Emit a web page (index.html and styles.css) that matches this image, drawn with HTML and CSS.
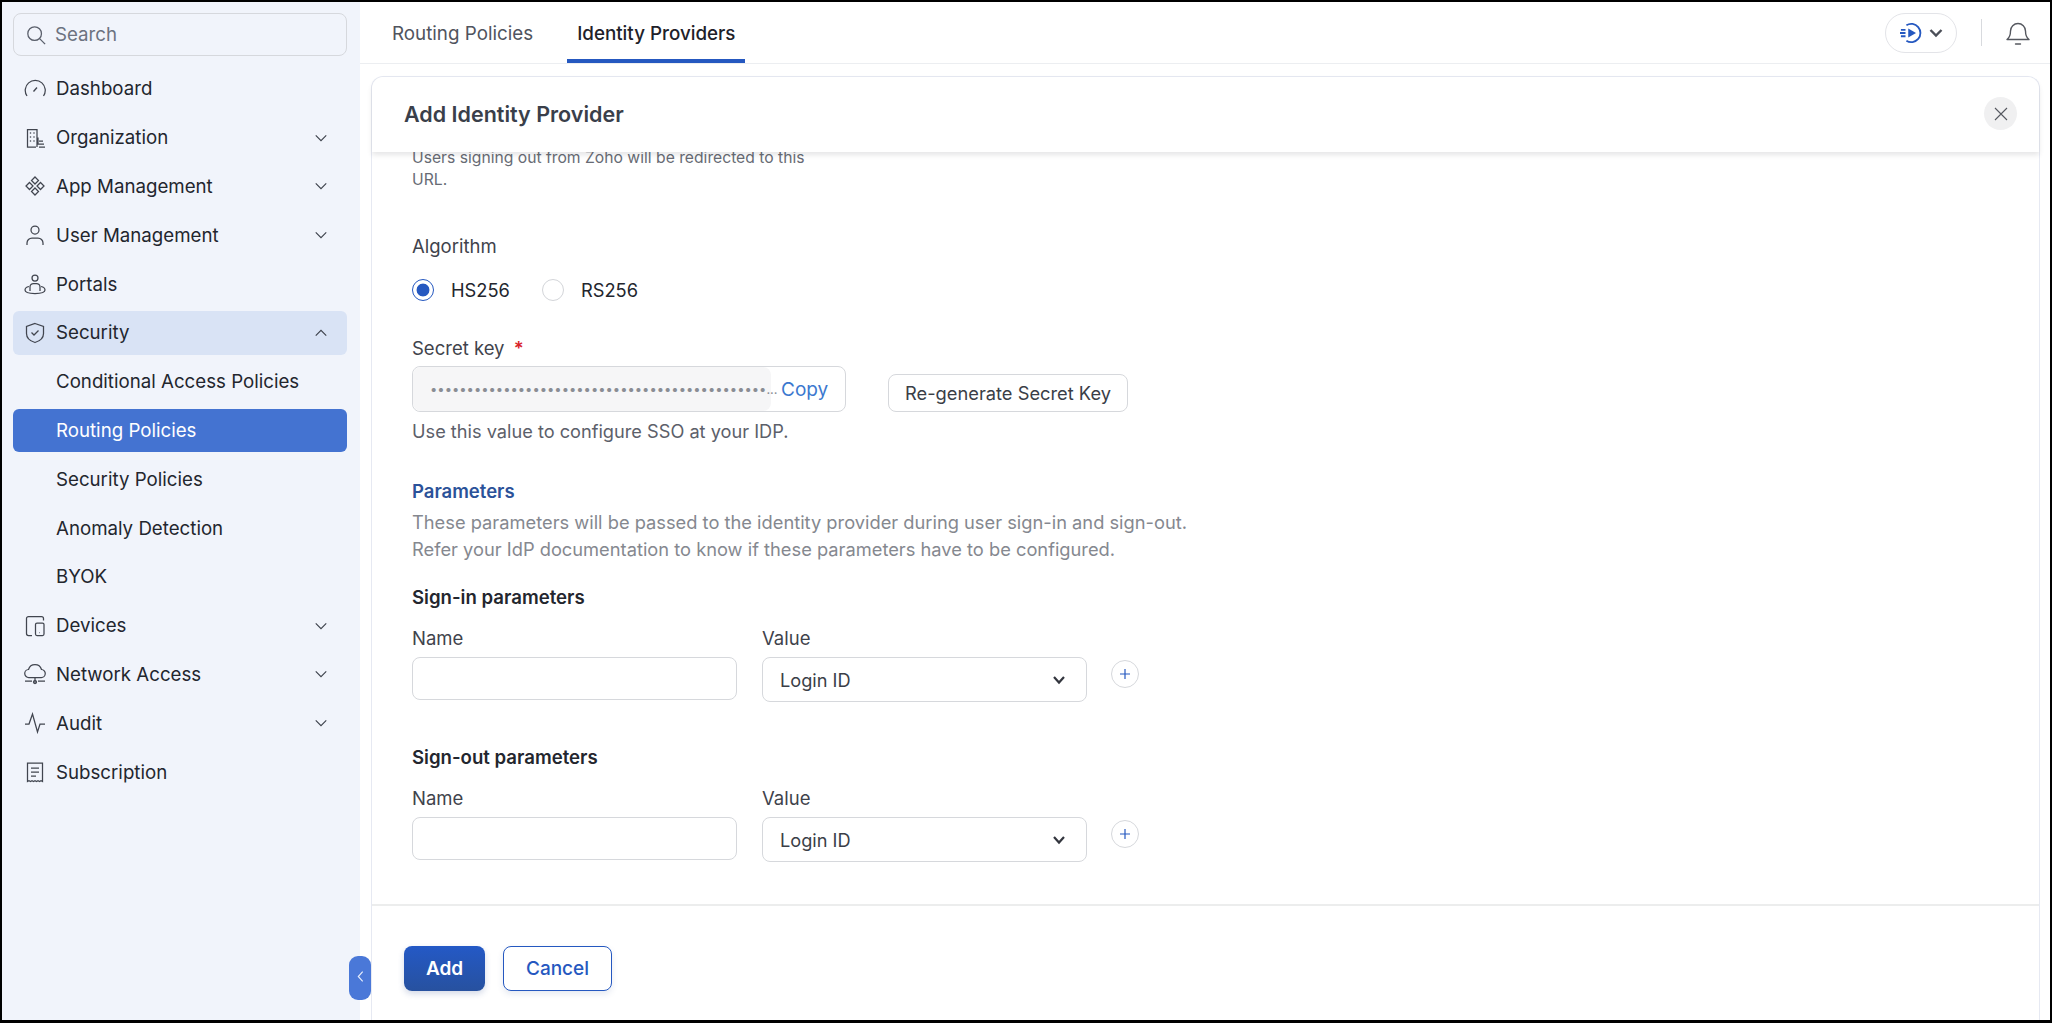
FILE: index.html
```html
<!DOCTYPE html>
<html>
<head>
	<title>Add Identity Provider</title>
	<link rel="stylesheet" href="styles.css">
</head>
<body>
	<svg class="defs">
		<symbol id="chev" viewBox="0 0 16 16"><path d="M2 5l6 6 6-6" fill="none" stroke="currentColor" stroke-width="1.3"/></symbol>
	</svg>
	<aside class="sidebar">
		<div class="search">
			<svg class="search-icon" viewBox="0 0 22 22"><circle cx="9.5" cy="9.5" r="7.5"/><path d="M15 15l6 6"/></svg>
			<span>Search</span>
		</div>
		<nav class="menu">
			<a class="menu-item">
				<svg class="ico" viewBox="0 0 22 22"><path d="M3 18A10 10 0 1 1 19.5 18"/><path d="M9.5 13.5l3.5-4"/></svg>
				<span>Dashboard</span>
			</a>
			<a class="menu-item">
				<svg class="ico" viewBox="0 0 22 22"><path d="M12 20H3.500V2.500H13V20M13 11h1v6h6M15 20h6M15 14h4"/><path class="dots" d="M6.500 6h.01M10 6h.01M6.500 10h.01M10 10h.01M6.500 14h.01M10 14h.01"/></svg>
				<span>Organization</span>
				<svg class="chev"><use href="#chev"/></svg>
			</a>
			<a class="menu-item">
				<svg class="ico" viewBox="0 0 22 22"><path d="M11 2l3.500 3.500L11 9 7.500 5.500zM5.500 7.500L9 11l-3.500 3.500L2 11zM16.500 7.500L20 11l-3.500 3.500L13 11zM11 13l3.500 3.500L11 20l-3.500-3.500z"/></svg>
				<span>App Management</span>
				<svg class="chev"><use href="#chev"/></svg>
			</a>
			<a class="menu-item">
				<svg class="ico" viewBox="0 0 22 22"><circle cx="11" cy="6" r="4"/><path d="M3 21v-2a5 5 0 0 1 5-5h6a5 5 0 0 1 5 5v2"/></svg>
				<span>User Management</span>
				<svg class="chev"><use href="#chev"/></svg>
			</a>
			<a class="menu-item">
				<svg class="ico" viewBox="0 0 22 22"><circle cx="11" cy="5" r="3"/><path d="M6 14a3.500 3.500 0 0 1 3.500-3.500h3A3.500 3.500 0 0 1 16 14v4M6 14v4"/><path d="M5 13.500C2.500 14 1 15.500 1 17c0 2 4 3.500 10 3.500s10-1.500 10-3.500c0-1.500-1.500-3-4-3.500"/></svg>
				<span>Portals</span>
			</a>
			<a class="menu-item open">
				<svg class="ico" viewBox="0 0 22 22"><path d="M11 1.500l8.500 3v7c0 4.500-3.500 7.500-8.500 9-5-1.500-8.500-4.500-8.500-9v-7z"/><path d="M7.500 10.500l2.500 2.500 4.500-4.500"/></svg>
				<span>Security</span>
				<svg class="chev up"><use href="#chev"/></svg>
			</a>
			<a class="menu-item">
				<span class="sub">Conditional Access Policies</span>
			</a>
			<a class="menu-item active">
				<span class="sub">Routing Policies</span>
			</a>
			<a class="menu-item">
				<span class="sub">Security Policies</span>
			</a>
			<a class="menu-item">
				<span class="sub">Anomaly Detection</span>
			</a>
			<a class="menu-item">
				<span class="sub">BYOK</span>
			</a>
			<a class="menu-item">
				<svg class="ico" viewBox="0 0 22 22"><path d="M8 20.500H4.500a2 2 0 0 1-2-2v-15a2 2 0 0 1 2-2h13a2 2 0 0 1 2 2v2"/><rect x="11.500" y="8" width="8.500" height="12.500" rx="1.500"/><path d="M15.500 17.500h.5"/></svg>
				<span>Devices</span>
				<svg class="chev"><use href="#chev"/></svg>
			</a>
			<a class="menu-item">
				<svg class="ico" viewBox="0 0 22 22"><path d="M6 14.500H5a4 4 0 0 1-.5-8 6.800 6.800 0 0 1 13 0 4 4 0 0 1-.5 8zM11 14.500V20M1 18h7M14 18h7"/><circle cx="11" cy="19" r="1.500"/></svg>
				<span>Network Access</span>
				<svg class="chev"><use href="#chev"/></svg>
			</a>
			<a class="menu-item">
				<svg class="ico" viewBox="0 0 22 22"><path d="M1 12h4l3.500-10 5 18 2.500-8h5"/></svg>
				<span>Audit</span>
				<svg class="chev"><use href="#chev"/></svg>
			</a>
			<a class="menu-item">
				<svg class="ico" viewBox="0 0 22 22"><path d="M3.500 2h15v18.500l-1.500-.8-1.500.8-1.500-.8-1.500.8-1.500-.8-1.500.8-1.500-.8-1.500.8-1.500-.8-1.500.8z"/><path d="M7 7h8M7 11h8M7 15h5"/></svg>
				<span>Subscription</span>
			</a>
		</nav>
	</aside>
	<button class="collapse">
		<svg viewBox="0 0 8 14"><path d="M6.500 1.500L1.500 7l5 5.500"/></svg>
	</button>
	<main class="main">
		<header class="topbar">
			<a class="tab">Routing Policies</a>
			<a class="tab tab-active">Identity Providers</a>
			<div class="top-actions">
				<div class="pill">
					<svg class="pill-play" viewBox="0 0 24 24"><path class="ring" d="M7 3.500A10 10 0 1 1 7 20.500"/><path class="tri" d="M9 7l8.500 5L9 17z"/><path class="ring" d="M1 8.500h5M0 12h6M1 15.500h5"/></svg>
					<svg class="pill-chev" viewBox="0 0 14 10"><path d="M1.500 2l5.500 5.500L12.500 2"/></svg>
				</div>
				<span class="top-sep"></span>
				<svg class="bell" viewBox="0 0 24 26"><path d="M1 19.500c2.800-2 3.500-4 3.500-8.500a7.500 7.500 0 0 1 15 0c0 4.500.7 6.500 3.500 8.500z"/><path d="M9.500 24h5"/></svg>
			</div>
		</header>
		<section class="panel">
			<div class="panel-head">
				<h2 class="panel-title">Add Identity Provider</h2>
				<button class="close">
					<svg viewBox="0 0 14 14"><path d="M1 1l12 12M13 1L1 13"/></svg>
				</button>
			</div>
			<div class="panel-body">
				<p class="hint">Users signing out from Zoho will be redirected to this URL.</p>

				<div class="label mt-algo">Algorithm</div>
				<div class="radios">
					<span class="radio radio-on"></span>
					<span class="radio-label">HS256</span>
					<span class="radio"></span>
					<span class="radio-label">RS256</span>
				</div>

				<div class="label mt-secret">Secret key <span class="req">*</span></div>
				<div class="key-row">
					<div class="key-box">
						<div class="key-value">••••••••••••••••••••••••••••••••••••••••••••••...</div>
						<a class="copy">Copy</a>
					</div>
					<button class="btn-plain">Re-generate Secret Key</button>
				</div>
				<div class="help">Use this value to configure SSO at your IDP.</div>

				<h3 class="section-title">Parameters</h3>
				<p class="section-desc">These parameters will be passed to the identity provider during user sign-in and sign-out.<br>Refer your IdP documentation to know if these parameters have to be configured.</p>

				<h4 class="group-title">Sign-in parameters</h4>
				<div class="param-labels">
					<span class="label">Name</span>
					<span class="label">Value</span>
				</div>
				<div class="param-row">
					<div class="text-input"></div>
					<div class="select"><span>Login ID</span>
						<svg viewBox="0 0 14 10"><path d="M2 2l5 5.500L12 2"/></svg>
					</div>
					<button class="plus"><svg viewBox="0 0 12 12"><path d="M6 1v10M1 6h10"/></svg></button>
				</div>

				<h4 class="group-title mt-out">Sign-out parameters</h4>
				<div class="param-labels">
					<span class="label">Name</span>
					<span class="label">Value</span>
				</div>
				<div class="param-row">
					<div class="text-input"></div>
					<div class="select"><span>Login ID</span>
						<svg viewBox="0 0 14 10"><path d="M2 2l5 5.500L12 2"/></svg>
					</div>
					<button class="plus"><svg viewBox="0 0 12 12"><path d="M6 1v10M1 6h10"/></svg></button>
				</div>
			</div>
			<div class="panel-foot">
				<button class="btn-add">Add</button>
				<button class="btn-cancel">Cancel</button>
			</div>
		</section>
	</main>
</body>
</html>
```

FILE: styles.css
```css
* {
	box-sizing: border-box;
}
html, body {
	margin: 0;
	height: 100%;
}
body {
	display: flex;
	position: relative;
	height: 1023px;
	overflow: hidden;
	border: solid #000;
	border-width: 2px 2px 3px 2px;
	font-family: Inter, "Noto Sans", sans-serif;
	color: #23262e;
	background: #fff;
}
button {
	font-family: inherit;
	cursor: pointer;
}
.defs {
	display: none;
}

/* sidebar */
.sidebar {
	width: 358px;
	flex: none;
	padding: 11px 13px 0 11px;
	background: #f1f4fb;
}
.search {
	display: flex;
	align-items: center;
	gap: 9px;
	height: 43px;
	padding-left: 12px;
	border: 1px solid #d6d8dd;
	border-radius: 8px;
	font-size: 18.700px;
	color: #6c7280;
}
.search-icon {
	width: 20px;
	height: 20px;
	fill: none;
	stroke: #5a5f6b;
	stroke-width: 1.4;
}
.menu {
	display: flex;
	flex-direction: column;
	gap: 5px;
	margin-top: 11px;
}
.menu-item {
	display: flex;
	align-items: center;
	height: 43.8px;
	padding-left: 11px;
	border-radius: 6px;
	font-size: 18.700px;
	color: #23262e;
}
.menu-item .sub {
	margin-left: 32px;
}
.ico {
	width: 22px;
	height: 22px;
	margin-right: 10px;
	flex: none;
	fill: none;
	stroke: #41454f;
	stroke-width: 1.25;
}
.ico .dots {
	stroke-linecap: round;
	stroke-width: 1.6;
}
.chev {
	width: 14px;
	height: 14px;
	margin-left: auto;
	margin-right: 19px;
	color: #3c404a;
}
.chev.up {
	transform: rotate(180deg);
}
.open {
	background: #d9e3f5;
}
.active {
	background: #4473d1;
	color: #fff;
}
.collapse {
	position: absolute;
	left: 347px;
	top: 954px;
	width: 22px;
	height: 44px;
	padding: 0;
	border: 0;
	border-radius: 9px;
	background: #4a78d8;
	z-index: 3;
}
.collapse svg {
	width: 7px;
	height: 13px;
	fill: none;
	stroke: #e8eefb;
	stroke-width: 1.3;
}

/* top bar */
.main {
	flex: 1;
	display: flex;
	flex-direction: column;
	min-width: 0;
}
.topbar {
	display: flex;
	align-items: stretch;
	height: 62px;
	flex: none;
	padding-left: 22px;
	border-bottom: 1px solid #eceef1;
}
.tab {
	display: flex;
	align-items: center;
	height: 61px;
	padding: 5px 10px 0;
	margin-right: 24px;
	border-bottom: 4px solid transparent;
	font-size: 18.800px;
	color: #50545e;
}
.tab-active {
	color: #1e2129;
	font-weight: 500;
	border-bottom-color: #2558c0;
}
.top-actions {
	display: flex;
	align-items: center;
	margin-left: auto;
	padding-right: 20px;
}
.pill {
	display: flex;
	align-items: center;
	gap: 7px;
	width: 72px;
	height: 40px;
	padding-left: 14px;
	border: 1px solid #e3e4e8;
	border-radius: 20px;
}
.pill-play {
	width: 22px;
	height: 22px;
	fill: none;
}
.pill-play .ring {
	stroke: #2558c0;
	stroke-width: 2;
}
.pill-play .tri {
	fill: #2558c0;
}
.pill-chev {
	width: 14px;
	height: 10px;
	fill: none;
	stroke: #4b4f58;
	stroke-width: 2.4;
}
.top-sep {
	width: 1px;
	height: 27px;
	margin: 0 24px;
	background: #d8dade;
}
.bell {
	width: 24px;
	height: 26px;
	fill: none;
	stroke: #55585f;
	stroke-width: 1.4;
	stroke-linejoin: round;
	stroke-linecap: round;
}

/* panel */
.panel {
	flex: 1;
	display: flex;
	flex-direction: column;
	min-height: 0;
	margin: 12px 10px 0 11px;
	border: 1px solid #e6e9f2;
	border-bottom: 0;
	border-radius: 12px 12px 0 0;
}
.panel-head {
	position: relative;
	display: flex;
	align-items: center;
	justify-content: space-between;
	height: 75px;
	flex: none;
	padding: 0 22px 2px 32px;
	background: #fff;
	border-radius: 12px 12px 0 0;
	box-shadow: 0 3px 5px rgba(60, 60, 70, .13);
	z-index: 2;
}
.panel-title {
	margin: 0;
	font-size: 21.500px;
	font-weight: 600;
	color: #3a3f4a;
}
.close {
	display: flex;
	align-items: center;
	justify-content: center;
	width: 33px;
	height: 33px;
	padding: 0;
	border: 0;
	border-radius: 50%;
	background: #f0f0f1;
}
.close svg {
	width: 14px;
	height: 14px;
	fill: none;
	stroke: #55585f;
	stroke-width: 1.1;
}
.panel-body {
	flex: 1;
	min-height: 0;
	overflow: hidden;
	margin-top: -5px;
	padding-left: 40px;
}
.hint {
	width: 400px;
	margin: 0;
	font-size: 15.700px;
	line-height: 22px;
	color: #676b74;
}
.label {
	font-size: 18.500px;
	line-height: 22px;
	color: #3f434c;
}
.mt-algo {
	margin-top: 44px;
}
.radios {
	display: flex;
	align-items: center;
	height: 24px;
	margin-top: 21px;
}
.radio {
	width: 22px;
	height: 22px;
	border: 1px solid #d3d5d9;
	border-radius: 50%;
}
.radio-on {
	border: 1.5px solid #2558c0;
	background: radial-gradient(circle, #2558c0 0 6px, #fff 6.800px);
}
.radio-label {
	margin: 0 32px 0 17px;
	font-size: 18.300px;
	color: #23262e;
}
.mt-secret {
	margin-top: 35px;
}
.req {
	margin-left: 4px;
	color: #d8232a;
	font-weight: 600;
}
.key-row {
	display: flex;
	align-items: flex-end;
	margin-top: 7px;
}
.key-box {
	display: flex;
	align-items: center;
	width: 434px;
	height: 46px;
	border: 1px solid #d6d8dc;
	border-radius: 8px;
}
.key-value {
	display: flex;
	align-items: center;
	width: 358px;
	height: 100%;
	padding: 0 5px 0 17px;
	background: #f6f6f7;
	border-radius: 8px;
	font-size: 13px;
	white-space: nowrap;
	color: #8a8d94;
}
.copy {
	margin-left: 10px;
	font-size: 19px;
	color: #3b78cf;
}
.btn-plain {
	width: 240px;
	height: 38px;
	margin-left: 42px;
	padding: 0;
	border: 1px solid #d6d8dc;
	border-radius: 8px;
	background: #fff;
	font-size: 18.300px;
	color: #3a3e47;
}
.help {
	margin-top: 8px;
	font-size: 18.200px;
	line-height: 22px;
	color: #5c606a;
}
.section-title {
	margin: 38px 0 0;
	font-size: 18.500px;
	line-height: 22px;
	font-weight: 600;
	color: #2b5299;
}
.section-desc {
	margin: 7px 0 0;
	font-size: 18.300px;
	line-height: 27px;
	color: #85888f;
}
.group-title {
	margin: 23px 0 0;
	font-size: 18.600px;
	line-height: 22px;
	font-weight: 600;
	color: #23262e;
}
.mt-out {
	margin-top: 44px;
}
.param-labels {
	display: flex;
	margin-top: 19px;
}
.param-labels .label {
	width: 350px;
}
.param-row {
	display: flex;
	align-items: flex-start;
	margin-top: 8px;
}
.text-input {
	width: 325px;
	height: 43px;
	border: 1px solid #d6d8dc;
	border-radius: 8px;
}
.select {
	display: flex;
	align-items: center;
	justify-content: space-between;
	width: 325px;
	height: 45px;
	margin-left: 25px;
	padding: 0 20px 0 17px;
	border: 1px solid #d6d8dc;
	border-radius: 8px;
	font-size: 18.200px;
	color: #3a3e47;
}
.select svg {
	width: 14px;
	height: 10px;
	fill: none;
	stroke: #33363e;
	stroke-width: 2.2;
}
.plus {
	display: flex;
	align-items: center;
	justify-content: center;
	width: 28px;
	height: 28px;
	margin: 3px 0 0 24px;
	padding: 0;
	border: 1px solid #d6d8dc;
	border-radius: 50%;
	background: #fff;
}
.plus svg {
	width: 12px;
	height: 12px;
	fill: none;
	stroke: #2558c0;
	stroke-width: 1.2;
}
.panel-foot {
	display: flex;
	gap: 18px;
	height: 116px;
	flex: none;
	padding: 40px 0 0 32px;
	border-top: 2px solid #eceded;
}
.btn-add {
	width: 81px;
	height: 45px;
	border: 0;
	border-radius: 8px;
	background: linear-gradient(#2459c6, #27519f);
	box-shadow: 0 3px 6px rgba(40, 70, 140, .2);
	color: #fff;
	font-size: 19px;
	font-weight: 600;
}
.btn-cancel {
	width: 109px;
	height: 45px;
	border: 1.5px solid #2558c0;
	border-radius: 8px;
	background: #fff;
	box-shadow: 0 3px 6px rgba(40, 70, 140, .12);
	color: #2558c0;
	font-size: 19px;
	font-weight: 500;
}
```
